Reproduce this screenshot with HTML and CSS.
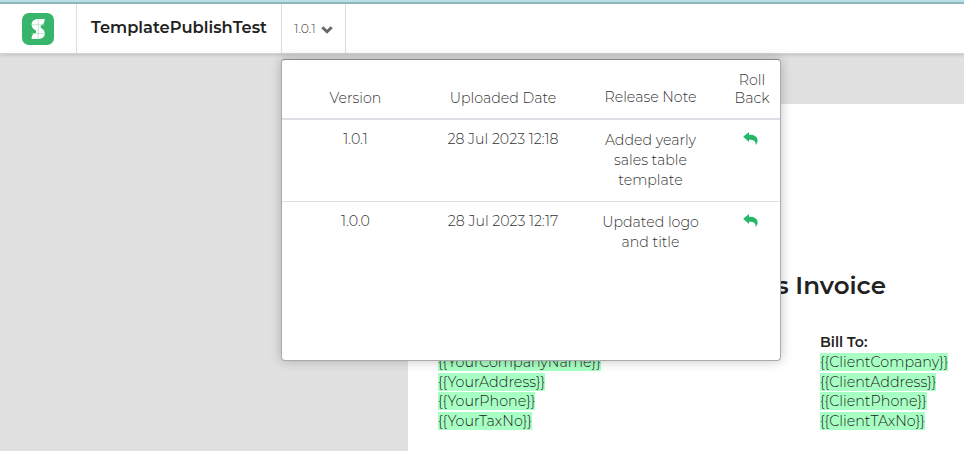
FILE: index.html
```
<!DOCTYPE html>
<html lang="en">
<head>
<meta charset="utf-8">
<title>TemplatePublishTest</title>
<link rel="stylesheet" href="styles.css">
</head>
<body>
<header class="topbar">
  <div class="brand">
    <svg width="32" height="32" viewBox="0 0 32 32">
      <rect width="32" height="32" rx="7" fill="#37b56b"/>
      <path d="M22.700 6H16C12.300 6 9.600 8.300 9.600 11.500 9.600 14.300 11.500 16.500 14 17.500V19.800C11.500 20 9.600 22.500 9.600 26H16.300C20 26 22.800 23.800 22.800 20.500 22.800 17.500 21 15.800 18.800 15V12.500C21 12 22.700 9.500 22.700 6Z" fill="#fff"/>
      <path d="M16.300 6v20M9.500 11.800h13M9.500 20.500h13.500" stroke="#a5dfbc" stroke-width=".7"/>
    </svg>
  </div>
  <h1 class="name">TemplatePublishTest</h1>
  <div class="version"><span>1.0.1</span>
    <svg width="12" height="8" viewBox="0 0 12 8"><path d="M1.300 1.300 6 5.800 10.700 1.300" fill="none" stroke="#666" stroke-width="2.900"/></svg>
  </div>
</header>
<main class="workspace">
  <article class="page">
    <h2 class="title">Sales Invoice</h2>
    <div class="parties">
      <div class="party">
        <p>&nbsp;</p>
        <p><mark>{{YourCompanyName}}</mark></p>
        <p><mark>{{YourAddress}}</mark></p>
        <p><mark>{{YourPhone}}</mark></p>
        <p><mark>{{YourTaxNo}}</mark></p>
      </div>
      <div class="party">
        <p><b>Bill To:</b></p>
        <p><mark>{{ClientCompany}}</mark></p>
        <p><mark>{{ClientAddress}}</mark></p>
        <p><mark>{{ClientPhone}}</mark></p>
        <p><mark>{{ClientTAxNo}}</mark></p>
      </div>
    </div>
  </article>
</main>
<section class="popover">
  <div class="row head">
    <div>Version</div><div>Uploaded Date</div><div class="note">Release Note</div><div>Roll<br>Back</div>
  </div>
  <div class="row first">
    <div>1.0.1</div><div>28 Jul 2023 12:18</div><div class="note">Added yearly<br>sales table<br>template</div>
    <div class="undo"><svg width="15" height="13" viewBox="0 0 15 13"><path d="M.2 4.800 6 0V2.700C11.500 2.700 14.600 4.500 14.600 8.500c0 1.800-.8 3.400-2.200 4.400.8-3.200-.8-5.200-6.400-5.200v2.300Z" fill="#25b767"/></svg></div>
  </div>
  <div class="row">
    <div>1.0.0</div><div>28 Jul 2023 12:17</div><div class="note">Updated logo<br>and title</div>
    <div class="undo"><svg width="15" height="13" viewBox="0 0 15 13"><path d="M.2 4.800 6 0V2.700C11.500 2.700 14.600 4.500 14.600 8.500c0 1.800-.8 3.400-2.200 4.400.8-3.200-.8-5.200-6.400-5.200v2.300Z" fill="#25b767"/></svg></div>
  </div>
</section>
</body>
</html>
```
FILE: styles.css
```
* { box-sizing: border-box; }
body {
  margin: 0;
  height: 451px;
  overflow: hidden;
  background: #e1e1e1;
  font-family: Montserrat, Inter, sans-serif;
  font-size: 14.2px;
  font-weight: 300;
  color: #333;
}
h1, h2, p { margin: 0; }
svg { display: block; }
.topbar {
  position: relative;
  display: flex;
  height: 54px;
  border-top: 2px solid #b5e0e5;
  border-bottom: 1px solid #d2d2d2;
  background: linear-gradient(#8fb6bb 2px, #fff 2px);
  box-shadow: 0 1px 4px rgba(0, 0, 0, .16);
}
.brand {
  width: 77px;
  margin-top: 2px;
  padding: 9px 0 0 22px;
  border-right: 1px solid #ddd;
}
.name {
  width: 205px;
  margin-top: 2px;
  padding: 13px 0 0 14px;
  border-right: 1px solid #ddd;
  font-size: 16.3px;
  line-height: 20px;
  font-weight: 600;
  color: #222;
  white-space: nowrap;
}
.version {
  display: flex;
  gap: 5px;
  width: 64px;
  margin-top: 2px;
  padding: 15px 0 0 12px;
  border-right: 1px solid #ddd;
  font-size: 12.5px;
  line-height: 20px;
  color: #444;
}
.version svg { margin-top: 7px; }
.workspace { padding: 50px 0 0 408px; }
.page {
  height: 347px;
  padding: 165px 0 0 30px;
  background: #fff;
  color: #222;
}
.title {
  width: 448px;
  text-align: right;
  font-size: 24.6px;
  line-height: 32px;
  font-weight: 600;
}
.parties {
  display: grid;
  grid-template-columns: 382px 1fr;
  margin-top: 32.400px;
}
.party { line-height: 19.6px; white-space: nowrap; }
.party p { height: 19.6px; }
.party b { font-weight: 600; }
mark {
  background: #a8ffc4;
  color: #222;
  font-size: 14.3px;
}
.popover {
  position: absolute;
  left: 281px;
  top: 59px;
  width: 500px;
  height: 302px;
  border: 1px solid #aaa;
  border-top-color: #888;
  border-radius: 4px;
  background: #fff;
  box-shadow: 0 0 12px rgba(0, 0, 0, .24);
}
.row {
  display: grid;
  grid-template-columns: 147px 148px 147px 56px;
  padding-top: 9px;
  line-height: 20px;
  text-align: center;
}
.row.first { height: 82px; border-bottom: 1px solid #dee0e4; }
.row .note { padding-top: 1px; }
.head {
  height: 60px;
  padding: 0 0 11px;
  border-bottom: 2px solid #dcdfe6;
  align-items: end;
  line-height: 18px;
}
.head .note { padding: 0 0 1px; }
.undo { padding: 3px 0 0 19px; }
```
